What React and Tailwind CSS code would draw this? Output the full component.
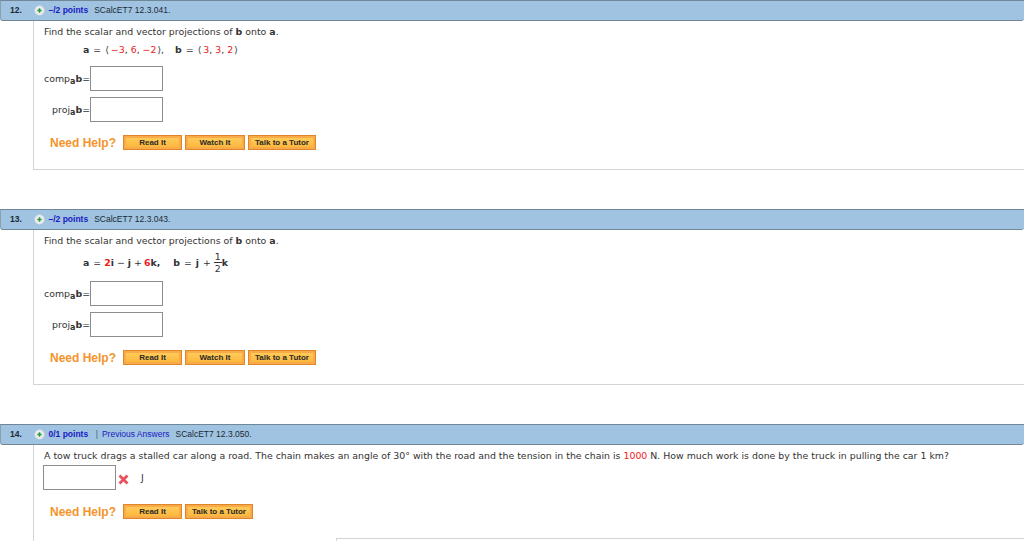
import React from "react";

const HelpButton = ({ label, width }) => (
  <button
    type="button"
    className={`${width} flex h-[15px] items-center justify-center border border-[#e0862a] bg-[#f8ab48] p-[2px]`}
  >
    <span className="flex h-full w-full items-center justify-center bg-gradient-to-b from-[#ffcb58] to-[#fdb83e] font-['Liberation_Sans',sans-serif] text-[8px] font-bold text-[#2c2a26]">
      {label}
    </span>
  </button>
);

const NeedHelp = ({ buttons, className }) => (
  <div className={`flex items-center ${className}`}>
    <span className="ml-[16px] w-[73px] font-['Liberation_Sans',sans-serif] text-[12px] font-bold leading-none text-[#f4942b]">
      Need Help?
    </span>
    <div className="flex gap-[3px]">
      {buttons.map((b) => (
        <HelpButton key={b.label} label={b.label} width={b.width} />
      ))}
    </div>
  </div>
);

const PlusIcon = () => (
  <svg width="11" height="11" viewBox="0 0 11 11" className="shrink-0">
    <circle cx="5.5" cy="5.5" r="5" fill="#e8edf1" stroke="#b8c6d2" strokeWidth="0.6" />
    <path d="M5.5 3.3v4.4M3.3 5.5h4.4" stroke="#2f9a35" strokeWidth="1.5" />
  </svg>
);

const Header = ({ num, points, code, previous, className }) => (
  <div
    className={`flex items-center rounded-b-[3px] border-y border-y-[#6f8797] border-l border-l-[#8aa0b0] bg-[#9fc3e0] font-['Liberation_Sans',sans-serif] text-[8.5px] leading-none ${className}`}
  >
    <span className="ml-[9px] w-[24px] font-bold text-[#1c2a36]">{num}</span>
    <PlusIcon />
    <span className="ml-[3.5px] font-bold text-[#1a1ac4]">{points}</span>
    {previous && (
      <>
        <span className="ml-[7.5px] text-[#44607a]">|</span>
        <span className="ml-[4px] text-[#1a1ac4]">Previous Answers</span>
      </>
    )}
    <span className="ml-[6px] text-[#1c2a36]">{code}</span>
  </div>
);

const AnswerRow = ({ sub, label, className }) => (
  <div className={`ml-[10px] flex items-center ${className}`}>
    <span className="flex w-[46px] items-baseline justify-end text-[9.4px] leading-none text-[#333]">
      {label}
      <sub className="text-[8px] font-bold leading-none">{sub}</sub>
      <b>b</b>
      <span>=</span>
    </span>
    <div className="h-[25px] w-[73px] border border-[#8d8d8d] bg-white" />
  </div>
);

const Red = ({ children }) => <span className="text-[#f01818]">{children}</span>;

const Prompt = () => (
  <p className="ml-[10px] text-[9.4px] leading-none text-[#333]">
    Find the scalar and vector projections of <b>b</b> onto <b>a</b>.
  </p>
);

const helpFull = [
  { label: "Read It", width: "w-[59px]" },
  { label: "Watch It", width: "w-[60px]" },
  { label: "Talk to a Tutor", width: "w-[68px]" },
];

const App = () => (
  <div className="h-[541px] w-[1024px] overflow-hidden bg-white font-['DejaVu_Sans',sans-serif]">
    {/* 12 */}
    <Header num="12." points="–/2 points" code="SCalcET7 12.3.041." className="h-[21px]" />
    <section className="ml-[33px] h-[149px] border-b border-l border-[#d4d4d4] pt-[6px]">
      <Prompt />
      <p className="ml-[49px] mt-[7px] flex items-center text-[9.4px] leading-[14px] text-[#333]">
        <b>a</b>
        <span className="ml-[4px]">=</span>
        <span className="ml-[4px] mr-[2px]">⟨</span>
        <Red>−3</Red>,&nbsp;<Red>6</Red>,&nbsp;<Red>−2</Red>
        <span className="ml-[1px]">⟩,</span>
        <b className="ml-[11px]">b</b>
        <span className="ml-[4px]">=</span>
        <span className="ml-[4px] mr-[2px]">⟨</span>
        <Red>3</Red>,&nbsp;<Red>3</Red>,&nbsp;<Red>2</Red>
        <span className="ml-[1px]">⟩</span>
      </p>
      <AnswerRow label="comp" sub="a" className="mt-[9px]" />
      <AnswerRow label="proj" sub="a" className="mt-[6px]" />
      <NeedHelp buttons={helpFull} className="mt-[13px]" />
    </section>

    {/* 13 */}
    <Header num="13." points="–/2 points" code="SCalcET7 12.3.043." className="mt-[39px] h-[21px]" />
    <section className="ml-[33px] h-[155px] border-b border-l border-[#d4d4d4] pt-[6px]">
      <Prompt />
      <div className="ml-[49px] mt-[5px] flex h-[24px] items-center text-[9.4px] font-bold leading-none text-[#333]">
        <span>a</span>
        <span className="ml-[4px] font-normal">=</span>
        <span className="ml-[3px]"><Red>2</Red>i</span>
        <span className="ml-[3px] font-normal">−</span>
        <span className="ml-[3px]">j</span>
        <span className="ml-[3px] font-normal">+</span>
        <span className="ml-[2px]"><Red>6</Red>k,</span>
        <span className="ml-[13px]">b</span>
        <span className="ml-[4px] font-normal">=</span>
        <span className="ml-[4px]">j</span>
        <span className="ml-[4px] font-normal">+</span>
        <span className="ml-[3px] flex flex-col items-center font-normal">
          <span className="border-b border-[#333] px-[1px] pb-[1px]">1</span>
          <span className="pt-[1px]">2</span>
        </span>
        <span>k</span>
      </div>
      <AnswerRow label="comp" sub="a" className="mt-[7px]" />
      <AnswerRow label="proj" sub="a" className="mt-[6px]" />
      <NeedHelp buttons={helpFull} className="mt-[13px]" />
    </section>

    {/* 14 */}
    <Header num="14." points="0/1 points" code="SCalcET7 12.3.050." previous className="mt-[39px] h-[21px]" />
    <section className="ml-[33px] flex h-[96px] flex-col border-l border-[#d4d4d4] pt-[6px]">
      <p className="ml-[10px] whitespace-nowrap text-[9.4px] leading-none text-[#333]">
        A tow truck drags a stalled car along a road. The chain makes an angle of 30° with the road and the tension in the chain is <Red>1000</Red> N. How much work is done by the truck in pulling the car 1 km?
      </p>
      <div className="ml-[9px] mt-[5px] flex items-center">
        <div className="h-[25px] w-[73px] border border-[#8d8d8d] bg-white" />
        <svg width="11" height="11" viewBox="0 0 11 11" className="ml-[2px] mt-[3px]">
          <path d="M1.5 1.5l8 8M9.5 1.5l-8 8" stroke="#e8505a" strokeWidth="2.8" />
        </svg>
        <span className="ml-[12px] text-[9.4px] leading-none text-[#333]">J</span>
      </div>
      <NeedHelp
        buttons={[
          { label: "Read It", width: "w-[59px]" },
          { label: "Talk to a Tutor", width: "w-[68px]" },
        ]}
        className="mt-[14px]"
      />
      <div className="ml-[302px] mt-auto h-[3px] border-l border-t border-[#d4d4d4]" />
    </section>
  </div>
);

export default App;
